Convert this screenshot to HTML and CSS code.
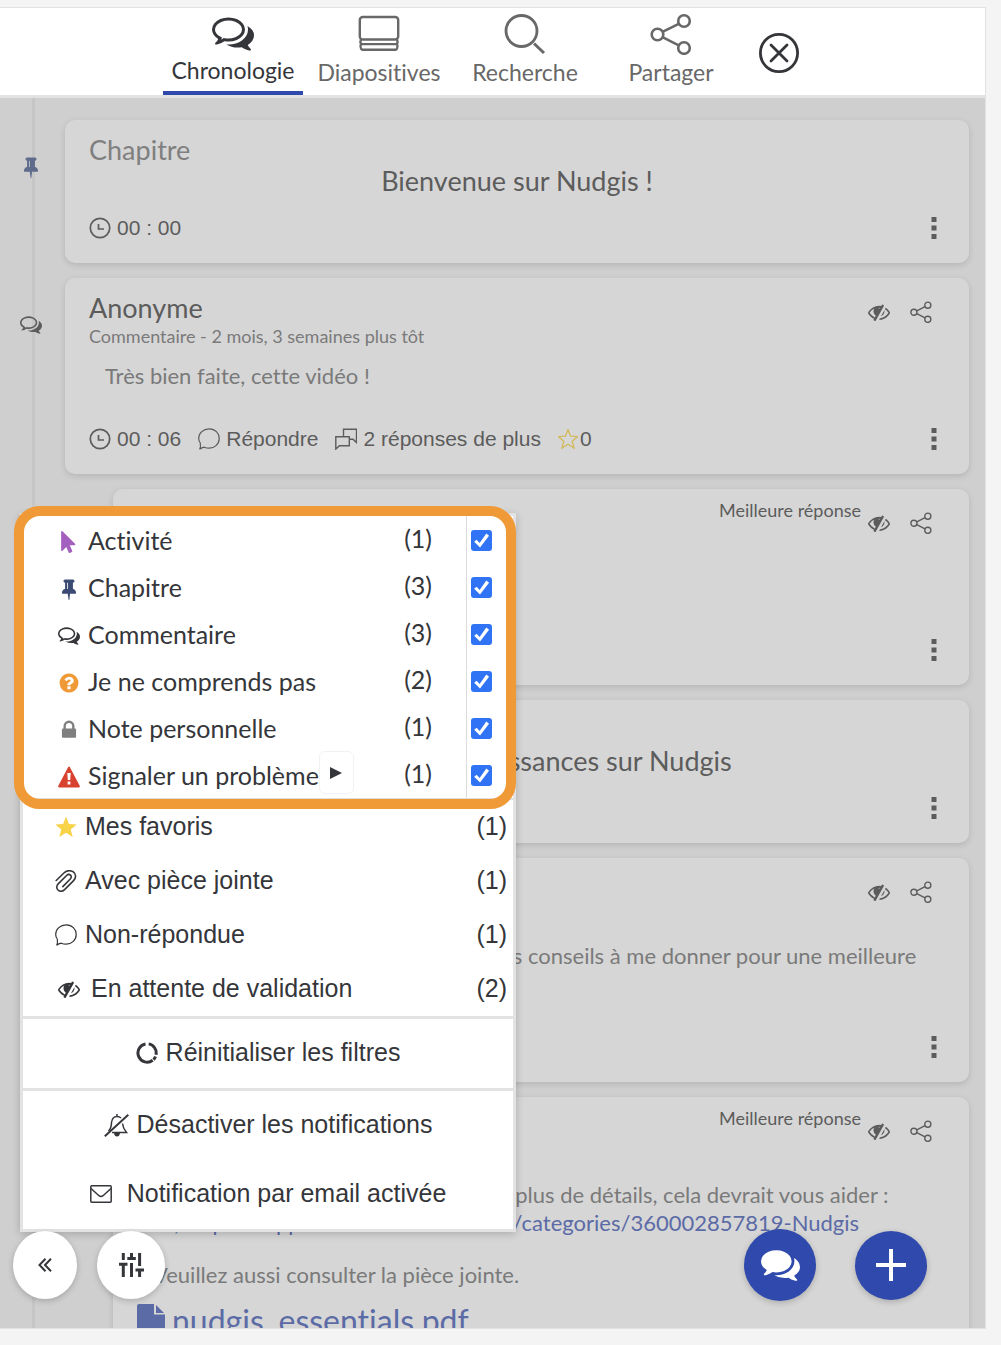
FILE: index.html
```
<!DOCTYPE html>
<html lang="fr">
<head>
<meta charset="utf-8">
<meta name="viewport" content="width=device-width, initial-scale=1">
<title>Nudgis</title>
<link rel="stylesheet" href="styles.css">
</head>
<body>
<svg class="sprite" aria-hidden="true">
  <symbol id="i-comments-o" viewBox="0 256 1792 1408"><path d="M704 384q-153 0-286 52t-211.500 141-78.500 191q0 82 53 158t149 132l97 56-35 84q34-20 62-39l44-31 53 10q78 14 153 14 153 0 286-52t211.500-141 78.500-191-78.500-191-211.500-141-286-52zm0-128q191 0 353.500 68.500t256.500 186.500 94 257-94 257-256.500 186.500-353.500 68.500q-86 0-176-16-124 88-278 128-36 9-86 16h-3q-11 0-20.500-8t-11.500-21q-1-3-1-6.500t.5-6.500 2-6l2.500-5 3.500-5.500 4-5 4.500-5 4-4.500q5-6 23-25t26-29.500 22.500-29 25-38.500 20.500-44q-124-72-195-177t-71-224q0-139 94-257t256.500-186.500 353.500-68.500zm822 1169q10 24 20.500 44t25 38.500 22.500 29 26 29.500 23 25q1 1 4 4.500t4.500 5 4 5 3.500 5.500l2.500 5 2 6 .5 6.500-1 6.500q-3 14-13 22t-22 7q-50-7-86-16-154-40-278-128-90 16-176 16-271 0-472-132 58 4 88 4 161 0 309-45t264-129q125-92 192-212t67-254q0-77-23-152 129 71 204 178t75 230q0 120-71 224.500t-195 176.500z"/></symbol>
  <symbol id="i-comments" viewBox="0 256 1792 1408"><path d="M1408 768q0 139-94 257t-256.500 186.500-353.500 68.500q-86 0-176-16-124 88-278 128-36 9-86 16h-3q-11 0-20.500-8t-11.500-21q-1-3-1-6.500t.5-6.500 2-6l2.500-5 3.500-5.500 4-5 4.500-5 4-4.500q5-6 23-25t26-29.500 22.500-29 25-38.500 20.500-44q-124-72-195-177t-71-224q0-139 94-257t256.500-186.500 353.500-68.500 353.500 68.500 256.500 186.500 94 257zm384 256q0 120-71 224.500t-195 176.500q10 24 20.500 44t25 38.500 22.500 29 26 29.500 23 25q1 1 4 4.500t4.500 5 4 5 3.500 5.500l2.500 5 2 6 .5 6.500-1 6.500q-3 14-13 22t-22 7q-50-7-86-16-154-40-278-128-90 16-176 16-271 0-472-132 58 4 88 4 161 0 309-45t264-129q125-92 192-212t67-254q0-77-23-152 129 71 204 178t75 230z"/></symbol>
  <symbol id="i-pin" viewBox="0 0 1792 1792"><path d="M800 864v-448q0-14-9-23t-23-9-23 9-9 23v448q0 14 9 23t23 9 23-9 9-23zm672 352q0 26-19 45t-45 19h-429l-51 483q-2 12-10.500 20.500t-20.500 8.500h-1q-27 0-32-27l-76-485h-404q-26 0-45-19t-19-45q0-123 78.500-221.500t177.500-98.500v-512q-52 0-90-38t-38-90 38-90 90-38h640q52 0 90 38t38 90-38 90-90 38v512q99 0 177.500 98.500t78.500 221.500z"/></symbol>
  <symbol id="i-pointer" viewBox="0 0 1792 1792"><path d="M1389 1043q31 30 14 69-17 40-59 40h-382l201 476q10 25 0 49t-34 35l-177 75q-25 10-49 0t-35-34l-191-452-312 312q-19 19-45 19-12 0-24-5-40-17-40-59v-1504q0-42 40-59 12-5 24-5 27 0 45 19z"/></symbol>
  <symbol id="i-question" viewBox="0 0 1792 1792"><path d="M1024 1376v-192q0-14-9-23t-23-9h-192q-14 0-23 9t-9 23v192q0 14 9 23t23 9h192q14 0 23-9t9-23zm256-672q0-88-55.500-163t-138.500-116-170-41q-243 0-371 213-15 24 8 42l132 100q7 6 19 6 16 0 25-12 53-68 86-92 34-24 86-24 48 0 85.500 26t37.500 59q0 38-20 61t-68 45q-63 28-115.500 86.500t-52.500 125.500v36q0 14 9 23t23 9h192q14 0 23-9t9-23q0-19 21.500-49.500t54.500-49.500q32-18 49-28.500t46-35 44.500-48 28-60.500 12.500-81zm384 192q0 209-103 385.500t-279.500 279.500-385.500 103-385.500-103-279.500-279.500-103-385.500 103-385.500 279.500-279.500 385.500-103 385.500 103 279.500 279.500 103 385.500z"/></symbol>
  <symbol id="i-lock" viewBox="0 0 1792 1792"><path d="M640 768h512v-192q0-106-75-181t-181-75-181 75-75 181v192zm832 96v576q0 40-28 68t-68 28h-960q-40 0-68-28t-28-68v-576q0-40 28-68t68-28h32v-192q0-184 132-316t316-132 316 132 132 316v192h32q40 0 68 28t28 68z"/></symbol>
  <symbol id="i-warning" viewBox="0 0 22 22"><path fill-rule="evenodd" d="M10.200 1q.8-1.200 1.600 0L21.800 20q.5 1.400-1 1.400H1.200q-1.500 0-1-1.400zM9.300 7l.5 7h2.400l.5-7zm.3 8.600v2.800h2.800v-2.800z"/></symbol>
  <symbol id="i-eye-off" viewBox="0 0 1792 1792"><path d="M555 1335l78-141q-87-63-136-159t-49-203q0-121 61-225-229 117-381 353 167 258 427 375zm389-759q0-20-14-34t-34-14q-125 0-214.500 89.500t-89.500 214.500q0 20 14 34t34 14 34-14 14-34q0-86 61-147t147-61q20 0 34-14t14-34zm363-191q0 7-1 9-106 189-316 567t-315 566l-49 89q-10 16-28 16-12 0-134-70-16-10-16-28 0-12 44-87-143-65-263.500-173t-208.500-245q-20-31-20-69t20-69q153-235 380-371t496-136q89 0 180 17l54-97q10-16 28-16 5 0 18 6t31 15.500 33 18.500 31.500 18.500 19.500 11.500q16 10 16 27zm37 447q0 139-79 253.500t-209 164.500l280-502q8 45 8 84zm448 128q0 35-20 69-39 64-109 145-150 172-347.500 267t-419.500 95l74-132q212-18 392.500-137t301.500-307q-115-179-282-294l63-112q95 64 182.500 153t144.500 184q20 34 20 69z"/><path d="M980 420L660 1000q-110-60-110-190 0-250 200-350z"/></symbol>
  <symbol id="i-star" viewBox="0 0 22 22"><path d="M11 .5l2.900 7.400 7.800.5-6 5 2 7.600-6.700-4.200L4.300 21l2-7.600-6-5 7.800-.5z"/></symbol>
  <symbol id="i-slides" viewBox="0 0 42 42"><g fill="none" stroke="currentColor" stroke-width="2.400"><rect x="1.800" y="4" width="38.400" height="22.500" rx="3"/><path d="M3 26.500q-1.200 2 0 4.600h36q1.200-2.600 0-4.600M3 31.100q-1.200 2.400 0 4.400.3 1.200 1.300 1.200h33.400q1 0 1.300-1.200 1.200-2 0-4.400"/></g></symbol>
  <symbol id="i-search" viewBox="0 0 42 42"><g fill="none" stroke="currentColor" stroke-width="2.800"><circle cx="17.500" cy="18" r="15.500"/><path d="M30 30.500l10 9.500" stroke-width="3"/></g></symbol>
  <symbol id="i-share" viewBox="0 0 42 42"><g fill="none" stroke="currentColor" stroke-width="2.600"><circle cx="7.500" cy="21.500" r="5.800"/><circle cx="34" cy="8" r="5.800"/><circle cx="34" cy="35" r="5.800"/><path d="M13 18.700L28.700 10.800M13 24.300l15.700 8"/></g></symbol>
  <symbol id="i-close" viewBox="0 0 40 40"><g fill="none" stroke="currentColor" stroke-width="2.800" stroke-linecap="round"><circle cx="20" cy="20" r="18.600"/><path d="M12 12l16 16M28 12L12 28"/></g></symbol>
  <symbol id="i-clock" viewBox="0 0 22 22"><g fill="none" stroke="currentColor" stroke-width="1.700"><circle cx="11" cy="11" r="9.700"/><path d="M9.500 7v5H15"/></g></symbol>
  <symbol id="i-bubble" viewBox="0 0 22 22"><path fill="none" stroke="currentColor" stroke-width="1.200" d="M1.600 21.300q1.300-2 .7-6.300Q.7 13 .7 10.500C.7 5 5.300.8 11.200.8s10 4.200 10 9.700-4.400 9.700-10 9.700q-2.700 0-5-1-2.400.5-4.600 2.100z"/></symbol>
  <symbol id="i-bubbles" viewBox="0 0 22 22"><path fill="none" stroke="currentColor" stroke-width="1.400" d="M8.500 8.500V1.200h13V14.500l-3.500-3.300H14.300M.8 8.700h13.500v9H4.500L.8 21z"/></symbol>
  <symbol id="i-clip" viewBox="0 0 22 22"><path fill="none" stroke="currentColor" stroke-width="1.600" stroke-linecap="round" d="M1.200 10.500L8.900 3C12 .2 15.500.3 18.300 1.800c3 2.200 3 6 .3 8.800l-9 9c-2.200 2-4.800 2-6.600.4s-1.600-4.400.4-6.400l8.200-8.100c1.200-1.200 2.800-1.300 3.900-.3s1 2.600-.2 3.800L7.800 16.600"/></symbol>
  <symbol id="i-reset" viewBox="0 0 22 22"><path fill="none" stroke="currentColor" stroke-width="3" d="M12.700 1.900A9.200 9.200 0 0 1 20 12.700M19.500 14.500A9.200 9.200 0 0 1 17.500 17.600M16.700 18.300A9.200 9.200 0 1 1 9.500 1.900"/></symbol>
  <symbol id="i-bell-off" viewBox="0 0 25 23"><g fill="none" stroke="currentColor" stroke-width="1.500"><path d="M4.500 17q3-3 3-8.500C8 4.500 10 2.500 13 2.500q2.500 0 4 1.500M18.500 9.500q.5 5 4 9H8M13 0v2.500"/><path stroke-width="2" d="M.8 22.200L24.300.8"/></g><path d="M10 19h6q-.5 3.500-3 3.500T10 19z"/></symbol>
  <symbol id="i-mail" viewBox="0 0 22 18"><g fill="none" stroke="currentColor" stroke-width="1.500"><rect x=".8" y=".8" width="20.400" height="16.400" rx="1"/><path d="M1 3.500l8 7.200q2 1.600 4 0l8-7.200"/></g></symbol>
  <symbol id="i-chevrons" viewBox="0 0 14 14"><path fill="none" stroke="currentColor" stroke-width="2" d="M7.500.8L1.500 7l6 6.200M13 .8L7 7l6 6.200"/></symbol>
  <symbol id="i-sliders" viewBox="0 0 25 24"><path fill="none" stroke="currentColor" stroke-width="3" d="M4.300 0v7M0 11.300h8.500M4.300 11v13M12.500 0v5M8.300 5.500h8.500M12.500 10v14M20.600 0v13M16.500 17h8.500M20.600 17v7"/></symbol>
  <symbol id="i-plus" viewBox="0 0 30 32"><path fill="none" stroke="currentColor" stroke-width="4" d="M15 0v32M0 16h30"/></symbol>
  <symbol id="i-file" viewBox="0 0 28 36"><path d="M2 0h15v10.500h11V34q0 2-2 2H2q-2 0-2-2V2q0-2 2-2zM19 1l8 8h-8z"/></symbol>
  <symbol id="i-more" viewBox="0 0 6 22"><path d="M.5 0h5v5h-5zM.5 8.500h5v5h-5zM.5 17h5v5h-5z"/></symbol>
  <symbol id="i-play" viewBox="0 0 12 12"><path d="M0 0l12 6-12 6z"/></symbol>
</svg>

<main class="panel">
  <nav class="tabs">
    <button class="tab tab-active"><svg class="tab-icon"><use href="#i-comments-o"/></svg>Chronologie</button>
    <button class="tab"><svg class="tab-icon"><use href="#i-slides"/></svg>Diapositives</button>
    <button class="tab"><svg class="tab-icon"><use href="#i-search"/></svg>Recherche</button>
    <button class="tab"><svg class="tab-icon"><use href="#i-share"/></svg>Partager</button>
    <button class="close" aria-label="Fermer"><svg><use href="#i-close"/></svg></button>
  </nav>

  <ol class="feed">
    <li class="item">
      <div class="marker marker-pin"><svg class="icon"><use href="#i-pin"/></svg></div>
      <article class="card">
        <header class="card-head"><h2 class="kind">Chapitre</h2></header>
        <h3 class="chapter">Bienvenue sur Nudgis !</h3>
        <footer class="card-foot">
          <span class="foot-item"><svg class="icon"><use href="#i-clock"/></svg>00 : 00</span>
          <button class="more" aria-label="Options"><svg><use href="#i-more"/></svg></button>
        </footer>
      </article>
    </li>
    <li class="item">
      <div class="marker"><svg class="icon"><use href="#i-comments-o"/></svg></div>
      <article class="card">
        <header class="card-head">
          <div><h2 class="author">Anonyme</h2><p class="meta">Commentaire - 2 mois, 3 semaines plus tôt</p></div>
          <div class="actions"><svg class="icon"><use href="#i-eye-off"/></svg><svg class="icon"><use href="#i-share"/></svg></div>
        </header>
        <div class="message"><p>Très bien faite, cette vidéo !</p></div>
        <footer class="card-foot">
          <span class="foot-item"><svg class="icon"><use href="#i-clock"/></svg>00 : 06</span>
          <button class="foot-item"><svg class="icon"><use href="#i-bubble"/></svg>Répondre</button>
          <button class="foot-item"><svg class="icon"><use href="#i-bubbles"/></svg>2 réponses de plus</button>
          <button class="foot-item vote"><svg class="icon star-outline"><use href="#i-star"/></svg>0</button>
          <button class="more" aria-label="Options"><svg><use href="#i-more"/></svg></button>
        </footer>
      </article>
    </li>
    <li class="item item-reply">
      <article class="card">
        <header class="card-head">
          <div><h2 class="author">Anonyme</h2><p class="meta">Commentaire</p></div>
          <div class="actions"><span class="badge">Meilleure réponse</span><svg class="icon"><use href="#i-eye-off"/></svg><svg class="icon"><use href="#i-share"/></svg></div>
        </header>
        <div class="message"><p>Merci !</p></div>
        <footer class="card-foot">
          <span class="foot-item"><svg class="icon"><use href="#i-clock"/></svg>00 : 06</span>
          <button class="more" aria-label="Options"><svg><use href="#i-more"/></svg></button>
        </footer>
      </article>
    </li>
    <li class="item">
      <div class="marker marker-pin"><svg class="icon"><use href="#i-pin"/></svg></div>
      <article class="card">
        <header class="card-head"><h2 class="kind">Chapitre</h2></header>
        <h3 class="chapter">Testez vos connaissances sur Nudgis</h3>
        <footer class="card-foot">
          <span class="foot-item"><svg class="icon"><use href="#i-clock"/></svg>00 : 30</span>
          <button class="more" aria-label="Options"><svg><use href="#i-more"/></svg></button>
        </footer>
      </article>
    </li>
    <li class="item">
      <div class="marker"><svg class="icon"><use href="#i-comments-o"/></svg></div>
      <article class="card">
        <header class="card-head">
          <div><h2 class="author">Anonyme</h2><p class="meta">Commentaire</p></div>
          <div class="actions"><svg class="icon"><use href="#i-eye-off"/></svg><svg class="icon"><use href="#i-share"/></svg></div>
        </header>
        <div class="message"><p>Bonjour tout le monde, avez-vous quelques conseils à me donner pour une meilleure utilisation ?</p></div>
        <footer class="card-foot">
          <span class="foot-item"><svg class="icon"><use href="#i-clock"/></svg>00 : 45</span>
          <button class="more" aria-label="Options"><svg><use href="#i-more"/></svg></button>
        </footer>
      </article>
    </li>
    <li class="item item-reply">
      <article class="card">
        <header class="card-head">
          <div><h2 class="author">Anonyme</h2><p class="meta">Commentaire</p></div>
          <div class="actions"><span class="badge">Meilleure réponse</span><svg class="icon"><use href="#i-eye-off"/></svg><svg class="icon"><use href="#i-share"/></svg></div>
        </header>
        <div class="message">
          <p>Bonjour, voici une page pour en avoir plus de détails, cela devrait vous aider :<br>
          <a class="link" href="#aide">ici, https://support.ubicast.eu/hc/fr-fr/categories/360002857819-Nudgis</a></p>
          <p>Veuillez aussi consulter la pièce jointe.</p>
        </div>
        <a class="attachment" href="#piece-jointe"><svg><use href="#i-file"/></svg>nudgis_essentials.pdf</a>
      </article>
    </li>
  </ol>

  <section class="menu" aria-label="Filtres">
    <div class="types">
      <label class="type"><svg class="icon purple"><use href="#i-pointer"/></svg><span>Activité</span><span class="type-count">(1)</span><span class="tick"><input type="checkbox" checked></span></label>
      <label class="type"><svg class="icon navy"><use href="#i-pin"/></svg><span>Chapitre</span><span class="type-count">(3)</span><span class="tick"><input type="checkbox" checked></span></label>
      <label class="type"><svg class="icon"><use href="#i-comments-o"/></svg><span>Commentaire</span><span class="type-count">(3)</span><span class="tick"><input type="checkbox" checked></span></label>
      <label class="type"><svg class="icon orange"><use href="#i-question"/></svg><span>Je ne comprends pas</span><span class="type-count">(2)</span><span class="tick"><input type="checkbox" checked></span></label>
      <label class="type"><svg class="icon grey"><use href="#i-lock"/></svg><span>Note personnelle</span><span class="type-count">(1)</span><span class="tick"><input type="checkbox" checked></span></label>
      <div class="type"><svg class="icon red"><use href="#i-warning"/></svg><label for="problem">Signaler un problème</label><button class="expand" aria-label="Détails"><svg><use href="#i-play"/></svg></button><span class="type-count">(1)</span><span class="tick"><input type="checkbox" id="problem" checked></span></div>
    </div>
    <div class="filters">
      <button class="filter"><svg class="icon yellow"><use href="#i-star"/></svg>Mes favoris<span class="filter-count">(1)</span></button>
      <button class="filter"><svg class="icon"><use href="#i-clip"/></svg>Avec pièce jointe<span class="filter-count">(1)</span></button>
      <button class="filter"><svg class="icon"><use href="#i-bubble"/></svg>Non-répondue<span class="filter-count">(1)</span></button>
      <button class="filter filter-pending"><svg class="icon"><use href="#i-eye-off"/></svg>En attente de validation<span class="filter-count">(2)</span></button>
    </div>
    <div class="group"><button class="command"><svg class="icon"><use href="#i-reset"/></svg>Réinitialiser les filtres</button></div>
    <div class="group">
      <button class="command"><svg class="icon icon-bell"><use href="#i-bell-off"/></svg>Désactiver les notifications</button>
      <button class="command command-mail"><svg class="icon icon-mail"><use href="#i-mail"/></svg>Notification par email activée</button>
    </div>
    <div class="highlight"></div>
  </section>

  <div class="toolbar">
    <button class="round round-back" aria-label="Replier"><svg><use href="#i-chevrons"/></svg></button>
    <button class="round round-filter" aria-label="Filtrer"><svg><use href="#i-sliders"/></svg></button>
    <button class="round round-blue round-chat" aria-label="Commenter"><svg><use href="#i-comments"/></svg></button>
    <button class="round round-blue round-add" aria-label="Ajouter"><svg><use href="#i-plus"/></svg></button>
  </div>
</main>
</body>
</html>
```
FILE: styles.css
```
* { box-sizing: border-box; }
body {
  margin: 0;
  height: 100vh;
  padding: 7px 15px 16px 0;
  background: #f4f4f4;
  color: #35363a;
  font-family: Lato, sans-serif;
  font-variant-ligatures: none;
}
h2, h3, p, ol { margin: 0; padding: 0; font-weight: 400; }
button {
  border: 0;
  padding: 0;
  background: none;
  color: inherit;
  font: inherit;
  cursor: pointer;
}
svg { display: block; fill: currentColor; }
.sprite { display: none; }
.icon { flex: none; width: 22px; height: 22px; }

.panel {
  position: relative;
  display: flex;
  flex-direction: column;
  height: 100%;
  border: 1px solid #e2e2e2;
  border-left: 0;
  overflow: hidden;
}

/* Tabs */
.tabs {
  flex: none;
  display: flex;
  justify-content: center;
  gap: 6px;
  height: 90px;
  border-bottom: 3px solid #e2e2e2;
  background: #fff;
}
.tab {
  display: flex;
  flex-direction: column;
  align-items: center;
  width: 140px;
  padding-top: 5px;
  color: #686868;
  font-size: 23px;
  line-height: 28px;
}
.tab-icon { width: 42px; height: 42px; margin-bottom: 3px; }
.tab-active {
  border-bottom: 4px solid #2f4aac;
  color: #35363a;
}
.tab-active .tab-icon { margin-bottom: 1px; }
.close { align-self: center; margin: 2px 23px 0 12px; color: #35363a; }
.close svg { width: 40px; height: 40px; }

/* Timeline */
.feed {
  flex: 1;
  min-height: 0;
  display: flex;
  flex-direction: column;
  gap: 15px;
  padding: 22px 16px 0 0;
  list-style: none;
  background: linear-gradient(#c6c6c6, #c6c6c6) 32px 0 / 3px 100% no-repeat #cfcfcf;
  color: #5c5c5c;
}
.item { flex: none; display: grid; grid-template-columns: 65px 1fr; }
.item-reply { grid-template-columns: 1fr; padding-left: 113px; }
.marker { padding: 36px 0 0 20px; }
.marker-pin { color: #5f6b8a; }
.card {
  padding: 13px 32px 21px 24px;
  border-radius: 10px;
  background: #d6d6d6;
  box-shadow: 0 2px 6px rgba(0, 0, 0, .13);
}
.card-head { display: flex; justify-content: space-between; }
.kind, .author, .chapter { font-size: 27px; line-height: 34px; }
.kind { color: #7f7f7f; }
.chapter { padding-left: 8px; line-height: 28px; text-align: center; }
.meta { color: #7a7a7a; font-size: 18px; line-height: 22px; }
.actions { display: flex; padding-right: 5px; }
.actions .icon { margin-top: 10px; }
.actions .icon + .icon { margin-left: 20px; }
.badge { margin-right: 7px; font-size: 18px; line-height: 16px; }
.message {
  padding: 15px 0 0 16px;
  color: #7a7a7a;
  font-size: 22px;
  line-height: 28px;
}
.message p + p { margin-top: 24px; }
.link, .attachment { color: #5b6ba6; text-decoration: none; }
.attachment {
  display: flex;
  gap: 7px;
  margin-top: 12px;
  font-size: 32px;
  line-height: 40px;
}
.attachment svg { flex: none; width: 28px; height: 36px; margin-top: 3px; }
.card-foot {
  display: flex;
  gap: 17px;
  margin-top: 35px;
  font: 21px/28px "Liberation Sans", sans-serif;
}
.chapter + .card-foot { margin-top: 19px; }
.foot-item { display: flex; align-items: center; gap: 6px; }
.foot-item .icon { margin-bottom: 1px; }
.vote { gap: 2px; }
.star-outline { width: 20px; height: 20px; fill: none; stroke: #d2ba5f; stroke-width: 1.5px; }
.more { margin-left: auto; }
.more svg { width: 6px; height: 22px; }

/* Filter menu */
.menu {
  position: absolute;
  bottom: 96px;
  left: 20px;
  width: 496px;
  border: 3px solid #e3e3e3;
  background: #fff;
  box-shadow: 0 2px 8px rgba(0, 0, 0, .2);
}
.types { border-bottom: 2px solid #dedede; font-size: 25px; line-height: 30px; }
.type { display: flex; align-items: center; height: 47px; padding: 0 21px 0 35px; }
.type .icon { margin: 5px 8px 0 0; }
.type-count { margin-left: auto; padding-bottom: 4px; }
.tick {
  display: flex;
  align-items: center;
  align-self: stretch;
  margin-left: 34px;
  padding: 2px 0 0 4px;
  border-left: 1px solid #dcdcdc;
}
.tick input {
  appearance: none;
  width: 21px;
  height: 21px;
  margin: 0;
  border-radius: 3px;
  background: #3074f5;
}
.tick input::before {
  content: "";
  display: block;
  height: 21px;
  background: #fff;
  clip-path: polygon(15% 56%, 27% 46%, 41% 62%, 73% 17%, 86% 27%, 43% 83%);
}
.expand {
  display: grid;
  place-items: center;
  width: 35px;
  height: 43px;
  margin-bottom: 4px;
  border: 1px solid #f2f2f2;
  border-radius: 6px;
}
.expand svg { width: 12px; height: 12px; }
.purple { color: #a360bf; }
.navy { color: #3b4b73; }
.orange { color: #f09a37; }
.grey { color: #7f7f7f; }
.red { color: #d8432f; }
.yellow { color: #f8d347; }

.filters, .group { font: 25px/30px "Liberation Sans", sans-serif; }
.filter {
  display: flex;
  align-items: center;
  gap: 8px;
  width: 100%;
  height: 54px;
  padding: 0 6px 2px 32px;
}
.filter-pending { gap: 11px; padding-left: 35px; }
.filter-count { margin-left: auto; }
.filter .icon { margin-top: 2px; }
.group { border-top: 3px solid #e3e3e3; }
.command {
  display: flex;
  align-items: center;
  justify-content: center;
  gap: 8px;
  width: 100%;
  height: 69px;
  padding-bottom: 3px;
}
.command .icon { margin-top: 2px; }
.command-mail { gap: 15px; }
.icon-bell { width: 25px; height: 23px; }
.icon-mail { height: 18px; }
.highlight {
  position: absolute;
  top: -10px;
  left: -9px;
  width: 502px;
  height: 303px;
  border: 10px solid #f09a37;
  border-radius: 26px;
  pointer-events: none;
}

/* Floating buttons */
.toolbar {
  position: absolute;
  right: 58px;
  bottom: 27px;
  left: 13px;
  display: flex;
  align-items: center;
}
.round {
  display: grid;
  place-items: center;
  width: 68px;
  height: 68px;
  border-radius: 50%;
  background: #fff;
  box-shadow: 0 2px 6px rgba(0, 0, 0, .2);
}
.round-back { width: 64px; }
.round-back svg { width: 14px; height: 14px; }
.round-filter { margin-left: 20px; }
.round-filter svg { width: 25px; height: 24px; }
.round-blue { width: 72px; height: 72px; background: #2f4aac; color: #fff; }
.round-chat { margin-left: auto; }
.round-chat svg { width: 39px; height: 31px; }
.round-add { height: 69px; margin-left: 39px; }
.round-add svg { width: 30px; height: 32px; }
```
